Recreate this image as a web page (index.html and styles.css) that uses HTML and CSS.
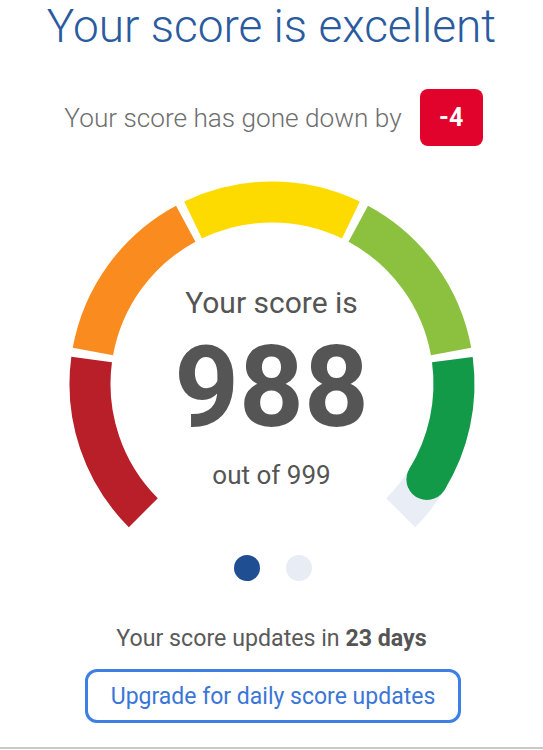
FILE: index.html
```html
<!DOCTYPE html>
<html lang="en">
<head>
    <meta charset="UTF-8">
    <meta name="viewport" content="width=device-width, initial-scale=1.0">
    <title>Your score</title>
    <link rel="stylesheet" href="styles.css">
</head>
<body>
    <div class="score-page">
        <h1 class="headline">Your score is excellent</h1>

        <div class="change-row">
            <span class="change-text">Your score has gone down by</span>
            <span class="change-badge">-4</span>
        </div>

        <!-- Gauge -->
        <div class="gauge">
            <svg class="gauge-arc" width="420" height="360" viewBox="0 0 420 360">
                <g fill="none" stroke-width="41">
                    <path d="M81.31 342.69 A182 182 0 0 1 29.64 189.61" stroke="#b81f28"/>
                    <path d="M30.93 181.46 A182 182 0 0 1 123.72 53.75" stroke="#f98b1f"/>
                    <path d="M131.07 50 A182 182 0 0 1 288.93 50" stroke="#fedb00"/>
                    <path d="M296.28 53.75 A182 182 0 0 1 389.07 181.46" stroke="#8cc13f"/>
                    <path d="M390.36 189.61 A182 182 0 0 1 338.69 342.69" stroke="#e8edf6"/>
                    <path d="M390.36 189.61 A182 182 0 0 1 364.9 309.4" stroke="#139a48"/>
                </g>
                <circle cx="364.9" cy="309.4" r="20.5" fill="#139a48"/>
            </svg>
            <div class="gauge-text">
                <div class="gauge-label">Your score is</div>
                <div class="gauge-score">988</div>
                <div class="gauge-max">out of 999</div>
            </div>
        </div>

        <div class="dots">
            <span class="dot active"></span>
            <span class="dot"></span>
        </div>

        <p class="updates">Your score updates in <strong>23 days</strong></p>

        <button class="upgrade-btn">Upgrade for daily score updates</button>

        <div class="footer-line"></div>
    </div>
</body>
</html>
```

FILE: styles.css
```css
/* Score page */
body {
    margin: 0;
    background: #fff;
    font-family: Roboto, 'Noto Sans', Arial, sans-serif;
    color: #555;
}
.score-page {
    display: flex;
    flex-direction: column;
    align-items: center;
}
.headline {
    margin: 0;
    font-size: 46px;
    line-height: 53px;
    font-weight: 300;
    color: #2a5b9e;
}
.change-row {
    display: flex;
    align-items: center;
    gap: 18px;
    margin-top: 36px;
    padding-left: 4px;
}
.change-text {
    font-size: 26.2px;
    font-weight: 300;
    color: #6e6e6e;
}
.change-badge {
    display: flex;
    align-items: center;
    justify-content: center;
    width: 63px;
    height: 57px;
    border-radius: 8px;
    background: #e2032c;
    color: #fff;
    font-size: 25px;
    font-weight: 700;
}
.gauge {
    display: grid;
    margin-top: 24px;
}
.gauge-arc,
.gauge-text {
    grid-area: 1 / 1;
}
.gauge-arc {
    display: block;
}
.gauge-text {
    display: flex;
    flex-direction: column;
    align-items: center;
    padding-top: 116px;
    color: #555;
}
.gauge-label {
    font-size: 30px;
    line-height: 34px;
}
.gauge-score {
    margin-top: 18px;
    font-size: 113px;
    line-height: 100px;
    font-weight: 700;
}
.gauge-max {
    margin-top: 22px;
    font-size: 26px;
    line-height: 30px;
}
.dots {
    display: flex;
    gap: 26px;
    margin-top: 25px;
    padding-left: 2px;
}
.dot {
    width: 26px;
    height: 26px;
    border-radius: 50%;
    background: #e8ecf5;
}
.dot.active {
    background: #1f4f92;
}
.updates {
    margin: 43px 0 0;
    font-size: 23.2px;
    line-height: 28px;
    color: #5a5a5a;
}
.updates strong {
    color: #555;
}
.upgrade-btn {
    margin-top: 17px;
    margin-left: 3px;
    height: 54px;
    padding: 0 23px;
    border: 3px solid #3d7fe3;
    border-radius: 12px;
    background: #fff;
    color: #3a76d6;
    font-family: inherit;
    font-size: 23px;
    cursor: pointer;
}
.footer-line {
    align-self: stretch;
    margin-top: 24px;
    border-top: 2px solid #c9c9c9;
    height: 10px;
}
```
